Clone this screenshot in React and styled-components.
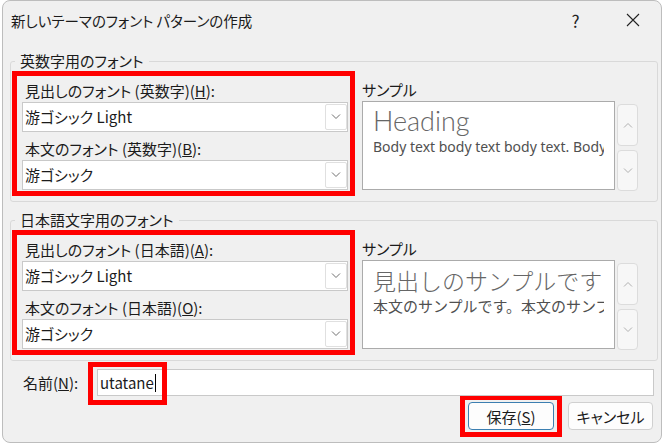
import React from "react";
import styled, { createGlobalStyle } from "styled-components";

const GlobalStyle = createGlobalStyle`
  html, body {
    margin: 0;
    background: #ffffff;
  }
  body {
    font-family: "Noto Sans CJK JP", "Noto Sans", sans-serif;
    font-feature-settings: "palt";
    color: #1b1b1b;
  }
`;

const Window = styled.div`
  box-sizing: border-box;
  width: 660px;
  height: 443px;
  margin-left: 2px;
  background: #f0f0f0;
  border: 1px solid #bdbdbd;
  border-radius: 8px;
  overflow: hidden;
  display: flex;
  flex-direction: column;
`;

const TitleBar = styled.div`
  height: 38px;
  display: flex;
  align-items: center;
  padding-left: 8px;
  font-size: 14.5px;
`;

const Title = styled.div`
  flex: 1;
`;

const TitleButton = styled.div`
  width: 57px;
  height: 38px;
  display: flex;
  align-items: center;
  justify-content: center;
  font-size: 17px;
  color: #222;
`;

const Body = styled.div`
  padding: 0 3px 0 7px;
  display: flex;
  flex-direction: column;
`;

const Group = styled.fieldset`
  margin: ${(p) => p.$top}px 0 0;
  border: 1px solid #d9d9d9;
  border-radius: 3px;
  padding: 0 18px 5px 1px;
  min-width: 0;
`;

const Legend = styled.legend`
  font-size: 15px;
  line-height: 20px;
  padding: 0 5px;
  margin-left: 3px;
`;

const GroupRow = styled.div`
  display: grid;
  grid-template-columns: 343px 276px;
  column-gap: 7px;
`;

const RedBox = styled.div`
  border: 5px solid #ff0000;
  padding: 4px 2px 1px 5px;
`;

const Field = styled.div`
  margin-top: ${(p) => (p.$first ? 0 : 6)}px;
`;

const FieldLabel = styled.div`
  height: 22px;
  line-height: 22px;
  padding-left: 3px;
  font-size: 15px;
`;

const Combo = styled.div`
  box-sizing: border-box;
  height: 30px;
  background: #ffffff;
  border: 1px solid #c9c9c9;
  display: flex;
  align-items: stretch;
`;

const ComboText = styled.div`
  flex: 1;
  padding-left: 2px;
  font-size: 15px;
  line-height: 28px;
`;

const DropButton = styled.div`
  width: 20px;
  margin: 1px 0;
  border: 1px solid #e0e0e0;
  border-radius: 2px;
  background: #ffffff;
  display: flex;
  align-items: center;
  justify-content: center;
`;

const SampleColumn = styled.div`
  padding-top: 8px;
`;

const SampleLabel = styled.div`
  height: 22px;
  line-height: 22px;
  font-size: 15px;
`;

const SampleRow = styled.div`
  display: flex;
  gap: 2px;
`;

const SampleBox = styled.div`
  box-sizing: border-box;
  width: 253px;
  height: 89px;
  background: #ffffff;
  border: 1px solid #ababab;
  padding: 3px 10px;
  font-feature-settings: normal;
`;

const Clip = styled.div`
  overflow: hidden;
  white-space: nowrap;
`;

const SampleHeading = styled.div`
  font-family: ${(p) => p.$font};
  font-weight: 300;
  font-size: ${(p) => p.$size}px;
  line-height: 32px;
  color: #666666;
`;

const SampleText = styled.div`
  font-size: ${(p) => p.$size}px;
  line-height: 20px;
  color: #505050;
  font-family: ${(p) => p.$font};
`;

const ScrollButtons = styled.div`
  display: flex;
  flex-direction: column;
  gap: 4px;
  padding-top: 3px;
`;

const ScrollButton = styled.div`
  box-sizing: border-box;
  width: 21px;
  height: ${(p) => p.$h}px;
  border: 1px solid #dcdcdc;
  border-radius: 4px;
  background: #f7f7f7;
  display: flex;
  align-items: center;
  justify-content: center;
`;

const NameRow = styled.div`
  margin-top: 8px;
  display: flex;
  align-items: center;
  padding-left: 13px;
  padding-right: 4px;
`;

const NameLabel = styled.div`
  font-size: 15px;
  width: 74px;
`;

const InputWrap = styled.div`
  position: relative;
  flex: 1;
`;

const Input = styled.div`
  box-sizing: border-box;
  height: 27px;
  background: #ffffff;
  border: 1px solid #c9c9c9;
  padding-left: 2px;
  font-size: 15px;
  line-height: 25px;
  display: flex;
  align-items: center;
`;

const Caret = styled.span`
  display: inline-block;
  width: 1px;
  height: 18px;
  background: #000;
  margin-left: 1px;
`;

const Highlight = styled.div`
  position: absolute;
  left: -9px;
  top: -7px;
  width: 79px;
  height: 43px;
  box-sizing: border-box;
  border: 5px solid #ff0000;
  pointer-events: none;
`;

const ButtonRow = styled.div`
  margin-top: -1px;
  display: flex;
  justify-content: flex-end;
  align-items: center;
  gap: 6px;
  padding-right: 5px;
`;

const RedFrame = styled.div`
  border: 5px solid #ff0000;
  padding: 2px 3px;
  display: flex;
`;

const Button = styled.div`
  box-sizing: border-box;
  width: ${(p) => p.$w}px;
  height: 28px;
  border-radius: 4px;
  background: #fdfdfd;
  border: 1px solid ${(p) => (p.$primary ? "#3c7fb1" : "#d0d0d0")};
  display: flex;
  align-items: center;
  justify-content: center;
  font-size: 15px;
`;

const Chevron = ({ up, color = "#8a8a8a" }) => (
  <svg width="10" height="6" viewBox="0 0 10 6">
    <polyline
      points={up ? "1,5.5 5,1.5 9,5.5" : "1,0.5 5,4.5 9,0.5"}
      fill="none"
      stroke={color}
      strokeWidth="1"
    />
  </svg>
);

const Select = ({ value }) => (
  <Combo>
    <ComboText>{value}</ComboText>
    <DropButton>
      <Chevron color="#6f6f6f" />
    </DropButton>
  </Combo>
);

function FontGroup({ top, legend, fields, children }) {
  return (
    <Group $top={top}>
      <Legend>{legend}</Legend>
      <GroupRow>
        <RedBox>
          {fields.map((f, i) => (
            <Field key={i} $first={i === 0}>
              <FieldLabel>
                {f.label}(<u>{f.key}</u>):
              </FieldLabel>
              <Select value={f.value} />
            </Field>
          ))}
        </RedBox>
        <SampleColumn>
          <SampleLabel>サンプル</SampleLabel>
          <SampleRow>
            <SampleBox>
              <Clip>{children}</Clip>
            </SampleBox>
            <ScrollButtons>
              <ScrollButton $h={42}>
                <Chevron up color="#b0b0b0" />
              </ScrollButton>
              <ScrollButton $h={41}>
                <Chevron color="#b0b0b0" />
              </ScrollButton>
            </ScrollButtons>
          </SampleRow>
        </SampleColumn>
      </GroupRow>
    </Group>
  );
}

export default function App() {
  return (
    <>
      <GlobalStyle />
      <Window>
        <TitleBar>
          <Title>新しいテーマのフォント パターンの作成</Title>
          <TitleButton>?</TitleButton>
          <TitleButton>
            <svg width="14" height="14" viewBox="0 0 14 14">
              <path d="M1 1 L13 13 M13 1 L1 13" stroke="#222" strokeWidth="1.1" />
            </svg>
          </TitleButton>
        </TitleBar>
        <Body>
          <FontGroup
            top={12}
            legend="英数字用のフォント"
            fields={[
              { label: "見出しのフォント (英数字)", key: "H", value: "游ゴシック Light" },
              { label: "本文のフォント (英数字)", key: "B", value: "游ゴシック" },
            ]}
          >
            <SampleHeading $size={27} $font={'Lato, "Noto Sans", sans-serif'}>
              Heading
            </SampleHeading>
            <SampleText $size={14} $font={'"Noto Sans", sans-serif'}>
              Body text body text body text. Body text
            </SampleText>
          </FontGroup>
          <FontGroup
            top={8}
            legend="日本語文字用のフォント"
            fields={[
              { label: "見出しのフォント (日本語)", key: "A", value: "游ゴシック Light" },
              { label: "本文のフォント (日本語)", key: "O", value: "游ゴシック" },
            ]}
          >
            <SampleHeading $size={23} $font={'"Noto Sans CJK JP", sans-serif'}>
              見出しのサンプルです
            </SampleHeading>
            <SampleText $size={15} $font={'"Noto Sans CJK JP", sans-serif'}>
              本文のサンプルです。本文のサンプルです。
            </SampleText>
          </FontGroup>
          <NameRow>
            <NameLabel>
              名前(<u>N</u>):
            </NameLabel>
            <InputWrap>
              <Input>
                utatane
                <Caret />
              </Input>
              <Highlight />
            </InputWrap>
          </NameRow>
          <ButtonRow>
            <RedFrame>
              <Button $w={86} $primary>
                保存(<u>S</u>)
              </Button>
            </RedFrame>
            <Button $w={85}>キャンセル</Button>
          </ButtonRow>
        </Body>
      </Window>
    </>
  );
}
